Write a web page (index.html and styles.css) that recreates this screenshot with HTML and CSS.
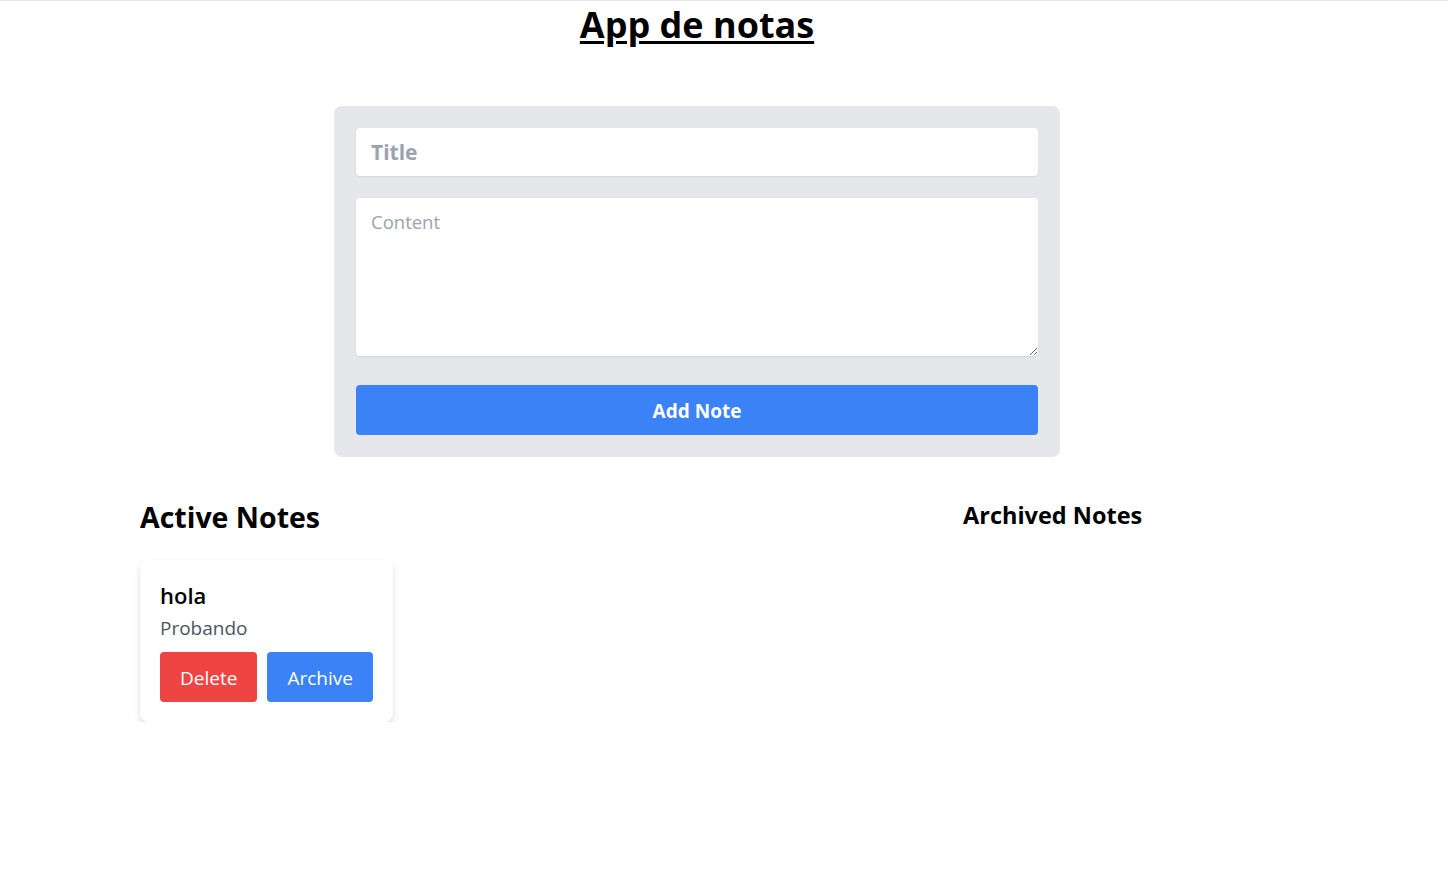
FILE: index.html
```html
<!DOCTYPE html>
<html lang="es">
<head>
<meta charset="utf-8">
<title>App de notas</title>
<link rel="stylesheet" href="styles.css">
</head>
<body>
<div class="page">
  <h1 class="app-title">App de notas</h1>
  <form class="note-form">
    <input class="title-input" type="text" placeholder="Title">
    <textarea class="content-input" placeholder="Content"></textarea>
    <button type="button" class="add-btn">Add Note</button>
  </form>
  <div class="columns">
    <section class="col col-active">
      <h2 class="active-heading">Active Notes</h2>
      <div class="card">
        <h3 class="card-title">hola</h3>
        <p class="card-text">Probando</p>
        <div class="card-actions">
          <button type="button" class="btn btn-delete">Delete</button>
          <button type="button" class="btn btn-archive">Archive</button>
        </div>
      </div>
    </section>
    <section class="col col-archived">
      <h2 class="archived-heading">Archived Notes</h2>
    </section>
  </div>
</div>
</body>
</html>
```
FILE: styles.css
```css
* { box-sizing: border-box; }
html, body { margin: 0; padding: 0; }
body {
  font-family: "Open Sans", "Noto Sans", sans-serif;
  background: #fff;
  color: #000;
  border-top: 1px solid #e5e7eb;
}
.page {
  width: 1394px;
}
.app-title {
  margin: 0;
  text-align: center;
  font-size: 36px;
  line-height: 48px;
  font-weight: 700;
  text-decoration: underline;
  text-underline-offset: 3px;
}
.note-form {
  width: 726px;
  margin: 57px auto 0;
  background: #e5e7eb;
  border-radius: 8px;
  padding: 22px;
  display: flex;
  flex-direction: column;
}
.title-input {
  height: 48px;
  border: none;
  border-radius: 4px;
  padding: 0 15px;
  font-family: inherit;
  font-size: 21px;
  font-weight: 700;
  box-shadow: 0 1px 2px rgba(0,0,0,0.08);
  outline: none;
}
.title-input::placeholder { color: #9ca3af; }
.content-input {
  margin-top: 22px;
  height: 158px;
  border: none;
  border-radius: 4px;
  padding: 11px 15px;
  font-family: inherit;
  font-size: 18.5px;
  box-shadow: 0 1px 2px rgba(0,0,0,0.08);
  outline: none;
  resize: vertical;
}
.content-input::placeholder { color: #9ca3af; }
.add-btn {
  margin-top: 29px;
  height: 50px;
  border: none;
  border-radius: 4px;
  background: #3b82f6;
  color: #fff;
  font-family: inherit;
  font-size: 19px;
  font-weight: 700;
  padding: 1px 0 0;
}
.columns {
  display: flex;
  padding-left: 140px;
  margin-top: 40px;
}
.col-active { width: 823px; }
.active-heading {
  margin: 0 0 23px;
  font-size: 28.5px;
  line-height: 40px;
  font-weight: 700;
}
.archived-heading {
  margin: 0;
  font-size: 23.5px;
  line-height: 36px;
  font-weight: 700;
}
.card {
  width: 253px;
  background: #fff;
  border-radius: 8px;
  padding: 20px;
  box-shadow: 0 4px 8px -1px rgba(0,0,0,0.12), 0 2px 4px -1px rgba(0,0,0,0.08);
}
.card-title {
  margin: 0;
  font-size: 22px;
  line-height: 30px;
  font-weight: 600;
}
.card-text {
  margin: 4px 0 10px;
  font-size: 19px;
  line-height: 28px;
  color: #4b5563;
}
.card-actions {
  display: flex;
  gap: 10px;
}
.btn {
  height: 50px;
  border: none;
  border-radius: 4px;
  padding: 2px 20px 0;
  color: #fff;
  font-family: inherit;
  font-size: 19px;
}
.btn-delete { background: #ef4444; }
.btn-archive { background: #3b82f6; }
```
